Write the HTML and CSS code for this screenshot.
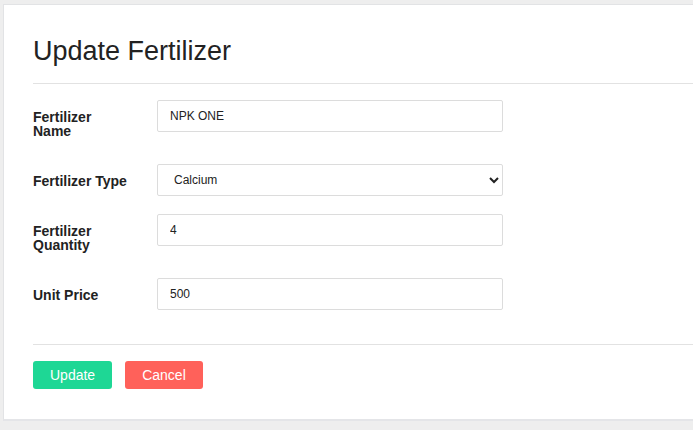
FILE: index.html
```html
<!DOCTYPE html>
<html lang="en">
<head>
<meta charset="utf-8">
<title>Update Fertilizer</title>
<link rel="stylesheet" href="styles.css">
</head>
<body>
<div class="card">
  <div class="card-header">
    <h1 class="title">Update Fertilizer</h1>
  </div>
  <form class="card-body">
    <div class="row">
      <label class="label" for="fname">Fertilizer Name</label>
      <input class="field" id="fname" type="text" value="NPK ONE">
    </div>
    <div class="row">
      <label class="label" for="ftype">Fertilizer Type</label>
      <select class="field select" id="ftype">
        <option>Calcium</option>
        <option>Nitrogen</option>
        <option>Phosphorus</option>
      </select>
    </div>
    <div class="row">
      <label class="label" for="fqty">Fertilizer Quantity</label>
      <input class="field" id="fqty" type="text" value="4">
    </div>
    <div class="row">
      <label class="label" for="fprice">Unit Price</label>
      <input class="field" id="fprice" type="text" value="500">
    </div>
  </form>
  <div class="card-footer">
    <button class="btn btn-update" type="button">Update</button>
    <button class="btn btn-cancel" type="button">Cancel</button>
  </div>
</div>
</body>
</html>
```
FILE: styles.css
```css
html, body {
  margin: 0;
  padding: 0;
  height: 100%;
  overflow: hidden;
}
body {
  background: #eeeeee;
  font-family: "Liberation Sans", Arial, sans-serif;
  color: #222;
}
.card {
  margin: 4px 0 0 3px;
  background: #fff;
  border: 1px solid #e2e3e5;
  border-right: none;
  border-bottom: 2px solid #e4e5e8;
  padding-left: 29px;
}
.card-header {
  padding-top: 30px;
  padding-bottom: 16px;
  border-bottom: 1px solid #e2e2e2;
}
.title {
  margin: 0;
  font-size: 27px;
  line-height: 32px;
  font-weight: 400;
  color: #222;
}
.card-body {
  margin: 0;
  padding: 16px 0 16px 0;
  border-bottom: 1px solid #e2e2e2;
}
.row {
  display: grid;
  grid-template-columns: 98px 346px;
  column-gap: 26px;
  align-items: start;
  margin-bottom: 18px;
}
.label {
  font-size: 14px;
  line-height: 14px;
  font-weight: 700;
  padding: 10px 0 8px 0;
  color: #222;
}
.field {
  box-sizing: border-box;
  width: 346px;
  height: 32px;
  border: 1px solid #dcdcdc;
  border-radius: 2px;
  padding: 0 12px;
  font-family: "Liberation Sans", Arial, sans-serif;
  font-size: 12px;
  color: #222;
  background: #fff;
  outline: none;
  margin: 0;
}
.card-footer {
  display: flex;
  gap: 13px;
  padding: 16px 0 30px 0;
}
.btn {
  height: 28px;
  padding: 0 17px;
  border: none;
  border-radius: 3px;
  color: #fff;
  font-family: "Liberation Sans", Arial, sans-serif;
  font-size: 14px;
  cursor: pointer;
}
.btn-update {
  background: #1ed795;
}
.btn-cancel {
  background: #ff615a;
}
```
